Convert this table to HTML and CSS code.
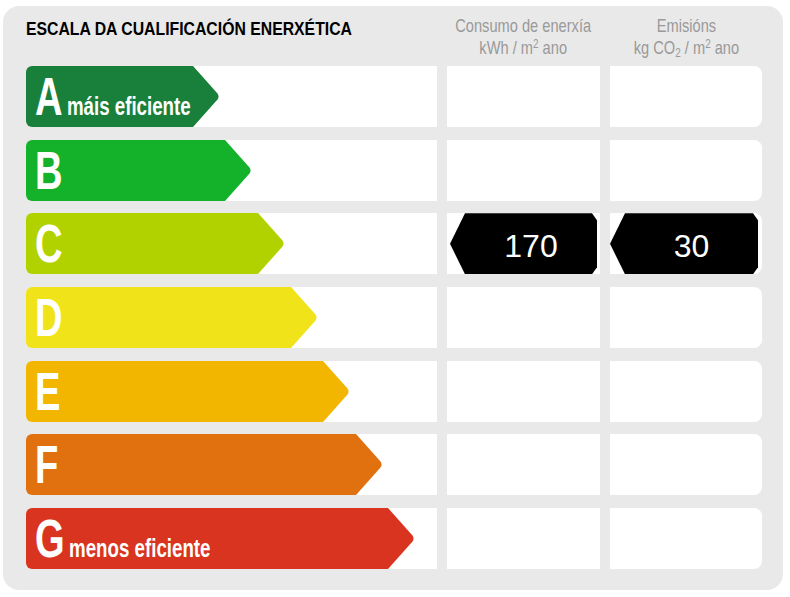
FILE: index.html
```html
<!DOCTYPE html>
<html lang="gl">
<head>
<meta charset="utf-8">
<title>Escala da cualificación enerxética</title>
<link rel="stylesheet" href="styles.css">
</head>
<body>
<div class="panel">
  <div class="title"><span class="title-text">ESCALA DA CUALIFICACIÓN ENERXÉTICA</span></div>
  <div class="colhead"><span class="colhead-text">Consumo de enerxía<br>kWh / m<sup>2</sup> ano</span></div>
  <div class="colhead"><span class="colhead-text">Emisións<br>kg CO<sub>2</sub> / m<sup>2</sup> ano</span></div>

  <div class="cell scale"><div class="arrow ar-a"><div class="body"><span class="label">A<span class="note">máis eficiente</span></span></div><svg class="tip" viewBox="0 0 29 61"><path d="M0 0H2L26.5 27.5Q28.6 30.5 26.5 33.5L2 61H0Z"/></svg></div></div>
  <div class="cell"></div>
  <div class="cell last"></div>

  <div class="cell scale"><div class="arrow ar-b"><div class="body"><span class="label">B</span></div><svg class="tip" viewBox="0 0 29 61"><path d="M0 0H2L26.5 27.5Q28.6 30.5 26.5 33.5L2 61H0Z"/></svg></div></div>
  <div class="cell"></div>
  <div class="cell last"></div>

  <div class="cell scale"><div class="arrow ar-c"><div class="body"><span class="label">C</span></div><svg class="tip" viewBox="0 0 29 61"><path d="M0 0H2L26.5 27.5Q28.6 30.5 26.5 33.5L2 61H0Z"/></svg></div></div>
  <div class="cell"><div class="badge badge-energy">170</div></div>
  <div class="cell last"><div class="badge badge-co2">30</div></div>

  <div class="cell scale"><div class="arrow ar-d"><div class="body"><span class="label">D</span></div><svg class="tip" viewBox="0 0 29 61"><path d="M0 0H2L26.5 27.5Q28.6 30.5 26.5 33.5L2 61H0Z"/></svg></div></div>
  <div class="cell"></div>
  <div class="cell last"></div>

  <div class="cell scale"><div class="arrow ar-e"><div class="body"><span class="label">E</span></div><svg class="tip" viewBox="0 0 29 61"><path d="M0 0H2L26.5 27.5Q28.6 30.5 26.5 33.5L2 61H0Z"/></svg></div></div>
  <div class="cell"></div>
  <div class="cell last"></div>

  <div class="cell scale"><div class="arrow ar-f"><div class="body"><span class="label">F</span></div><svg class="tip" viewBox="0 0 29 61"><path d="M0 0H2L26.5 27.5Q28.6 30.5 26.5 33.5L2 61H0Z"/></svg></div></div>
  <div class="cell"></div>
  <div class="cell last"></div>

  <div class="cell scale"><div class="arrow ar-g"><div class="body"><span class="label">G<span class="note">menos eficiente</span></span></div><svg class="tip" viewBox="0 0 29 61"><path d="M0 0H2L26.5 27.5Q28.6 30.5 26.5 33.5L2 61H0Z"/></svg></div></div>
  <div class="cell"></div>
  <div class="cell last"></div>
</div>
</body>
</html>
```

FILE: styles.css
```css
html, body {
  margin: 0;
  padding: 0;
  background: #ffffff;
}

body {
  font-family: "Liberation Sans", Arial, sans-serif;
}

.panel {
  margin: 6px 0 0 3px;
  width: 780px;
  height: 584px;
  box-sizing: border-box;
  padding: 0 21px 21px 23px;
  border-radius: 16px;
  background: #e9e9e9;
  display: grid;
  grid-template-columns: 411px 153px 152px;
  grid-template-rows: 47.33px repeat(7, 61px);
  column-gap: 10px;
  row-gap: 12.67px;
}

.title {
  padding-top: 13px;
  white-space: nowrap;
}

.title-text {
  display: inline-block;
  font-size: 18px;
  line-height: 20px;
  font-weight: bold;
  color: #000;
  transform: scaleX(0.877);
  transform-origin: 0 0;
}

.colhead {
  display: flex;
  justify-content: center;
  padding-top: 9px;
}

.colhead-text {
  flex: none;
  font-size: 19px;
  line-height: 22px;
  color: #999999;
  text-align: center;
  white-space: nowrap;
  transform: scaleX(0.77);
  transform-origin: 50% 0;
}

.colhead sup {
  font-size: 0.68em;
  vertical-align: 0.5em;
  line-height: 0;
}

.colhead sub {
  font-size: 0.68em;
  vertical-align: -0.25em;
  line-height: 0;
}

.cell {
  background: #ffffff;
  height: 61px;
}

.cell.last {
  border-radius: 0 8px 8px 0;
}

.scale {
  border-radius: 6px 0 0 6px;
}

.arrow {
  display: flex;
  height: 61px;
}

.arrow .body {
  flex: 1;
  min-width: 0;
  background: currentColor;
  border-radius: 6px 0 0 6px;
  padding-left: 9px;
}

.arrow .tip {
  width: 29px;
  height: 61px;
  flex: none;
  fill: currentColor;
}

.label {
  display: inline-block;
  white-space: nowrap;
  color: #ffffff;
  font-size: 53px;
  line-height: 61px;
  font-weight: bold;
  transform: scaleX(0.72);
  transform-origin: 0 0;
}

.note {
  font-size: 26px;
  line-height: 1;
  margin-left: 6px;
}

.ar-a { width: 194px; color: #18803a; }
.ar-b { width: 226px; color: #13b22a; }
.ar-c { width: 259px; color: #b2d200; }
.ar-d { width: 292px; color: #f0e31a; }
.ar-e { width: 324px; color: #f2b600; }
.ar-f { width: 357px; color: #e0710e; }
.ar-g { width: 389px; color: #d9341f; }

.badge {
  height: 61px;
  box-sizing: border-box;
  padding: 6px 0 0 15px;
  line-height: 55px;
  background: #000000;
  color: #ffffff;
  font-size: 32px;
  text-align: center;
  clip-path: polygon(15px 0, calc(100% - 5px) 0, 100% 7px, 100% calc(100% - 7px), calc(100% - 5px) 100%, 15px 100%, 0 50%);
}

.badge-energy {
  margin: 0 3px;
}

.badge-co2 {
  margin: 0 4px 0 0;
}
```
